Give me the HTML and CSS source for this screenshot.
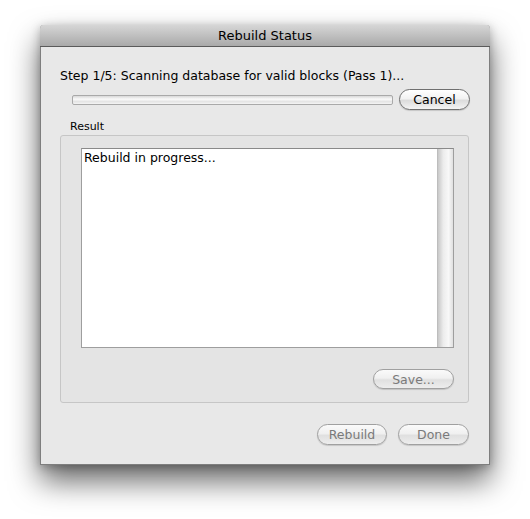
FILE: index.html
```html
<!DOCTYPE html>
<html>
<head>
<meta charset="utf-8">
<link rel="stylesheet" href="styles.css">
</head>
<body>
<div class="stage">
  <div class="window">
    <div class="titlebar">Rebuild Status</div>
    <div class="content">
      <div class="step">Step 1/5: Scanning database for valid blocks (Pass 1)...</div>
      <div class="progress-row">
        <div class="progress"></div>
        <button class="btn">Cancel</button>
      </div>
      <div class="group-label">Result</div>
      <div class="group">
        <div class="textarea">
          <div class="text">Rebuild in progress...</div>
          <div class="scroll"></div>
        </div>
        <div class="group-actions">
          <button class="btn disabled save">Save...</button>
        </div>
      </div>
      <div class="actions">
        <button class="btn disabled rebuild">Rebuild</button>
        <button class="btn disabled done">Done</button>
      </div>
    </div>
  </div>
</div>
</body>
</html>
```
FILE: styles.css
```css
html, body {
  margin: 0;
  padding: 0;
  background: #ffffff;
  font-family: "DejaVu Sans", "Liberation Sans", sans-serif;
}
.stage {
  padding: 25px 0 0 40px;
  height: 519px;
  box-sizing: border-box;
  overflow: hidden;
}
.window {
  width: 450px;
  height: 440px;
  box-sizing: border-box;
  background: #e8e8e8;
  border: 1px solid #7e7e7e;
  border-top: none;
  box-shadow: 0 16px 30px rgba(0, 0, 0, 0.6), 0 2px 10px rgba(0,0,0,0.25);
  border-radius: 4px 4px 0 0;
  display: flex;
  flex-direction: column;
}
.titlebar {
  height: 22px;
  box-sizing: border-box;
  border-bottom: 1px solid #5a5a5a;
  background: linear-gradient(#d6d6d6, #a9a9a9);
  border-radius: 4px 4px 0 0;
  margin: 0 -1px;
  text-align: center;
  font-size: 13px;
  line-height: 22px;
  color: #000;
}
.content {
  padding: 21px 19px 0 19px;
  display: flex;
  flex-direction: column;
}
.step {
  font-size: 12.5px;
  line-height: 16px;
  color: #000;
}
.progress-row {
  display: flex;
  align-items: center;
  margin: 5px 0 0 12px;
  gap: 6px;
}
.progress {
  flex: 1;
  height: 10px;
  box-sizing: border-box;
  border: 1px solid #a9a9a9;
  border-radius: 2px;
  background: linear-gradient(#d8d8d8, #fafafa 40%, #e4e4e4 70%, #f4f4f4);
}
.btn {
  font-family: inherit;
  font-size: 12.5px;
  height: 21px;
  padding: 0;
  border: 1px solid #6f6f6f;
  border-radius: 11px;
  background: linear-gradient(#ffffff, #f2f2f2 45%, #dcdcdc 55%, #f4f4f4);
  color: #000;
  width: 71px;
  box-shadow: 0 1px 1px rgba(0,0,0,0.15);
}
.btn.disabled {
  color: #7a7a7a;
  border-color: #a0a0a0;
  background: linear-gradient(#fafafa, #f0f0f0 45%, #e0e0e0 55%, #ededed);
}
.group-label {
  font-size: 11px;
  line-height: 14px;
  margin: 10px 0 0 10px;
  color: #000;
}
.group {
  margin-top: 1px;
  width: 409px;
  height: 268px;
  box-sizing: border-box;
  border: 1px solid #c6c6c6;
  border-radius: 3px;
  background: #e4e4e4;
  padding: 12px 14px 13px 20px;
  display: flex;
  flex-direction: column;
}
.textarea {
  height: 200px;
  box-sizing: border-box;
  border: 1px solid #9e9e9e;
  border-top-color: #8a8a8a;
  background: #fff;
  display: flex;
}
.text {
  flex: 1;
  font-size: 12.5px;
  line-height: 16px;
  padding: 1px 2px;
  color: #000;
}
.scroll {
  width: 15px;
  background: linear-gradient(90deg, #c8c8c8, #ececec 35%, #f8f8f8 70%, #e0e0e0);
  border-left: 1px solid #bdbdbd;
}
.group-actions {
  margin-top: auto;
  display: flex;
  justify-content: flex-end;
}
.save {
  width: 81px;
  height: 20px;
}
.actions {
  margin-top: 21px;
  display: flex;
  justify-content: flex-end;
  gap: 11px;
  padding-right: 1px;
}
.rebuild { width: 70px; }
```
